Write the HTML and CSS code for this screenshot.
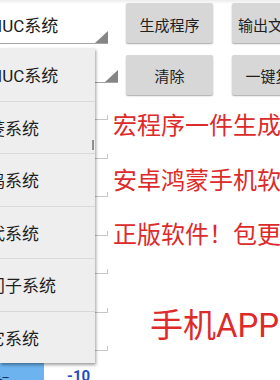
FILE: index.html
```html
<!DOCTYPE html>
<html lang="zh-CN">
<head>
<meta charset="utf-8">
<title>宏程序</title>
<link rel="stylesheet" href="styles.css">
</head>
<body>
<div class="screen">
  <div class="controls">
    <div class="spinner spinner-a">
      <span class="spinner-text">FANUC系统</span>
      <svg class="caret" width="13" height="12" viewBox="0 0 13 12"><polygon points="13,0 13,12 0,12"/></svg>
    </div>
    <button class="btn">生成程序</button>
    <button class="btn btn-right">输出文件名</button>
    <div class="spinner spinner-b">
      <span class="spinner-text">FANUC系统</span>
      <svg class="caret" width="13" height="12" viewBox="0 0 13 12"><polygon points="13,0 13,12 0,12"/></svg>
    </div>
    <button class="btn btn-low">清除</button>
    <button class="btn btn-right btn-low">一键复制</button>
  </div>

  <div class="content">
    <div class="fields">
      <div class="field-row first"><div class="field"></div></div>
      <div class="field-row"><div class="field"></div></div>
      <div class="field-row"><div class="field"></div></div>
      <div class="field-row"><div class="field"></div></div>
      <div class="field-row"><div class="field"></div></div>
      <div class="field-row"><div class="field"></div></div>
      <div class="field-row"><div class="field"></div></div>
    </div>
    <div class="promo">
      <p class="promo-line">宏程序一件生成器</p>
      <p class="promo-line">安卓鸿蒙手机软件</p>
      <p class="promo-line">正版软件！包更新</p>
      <p class="promo-big">手机APP软件</p>
    </div>
  </div>

  <div class="data-row">
    <div class="data-label"><span>坐标</span></div>
    <div class="data-value">-10</div>
  </div>

  <ul class="dropdown">
    <li class="item"><span>FANUC系统</span></li>
    <li class="item"><span>三菱系统</span></li>
    <li class="item"><span>宝鸡系统</span></li>
    <li class="item"><span>新代系统</span></li>
    <li class="item"><span>西门子系统</span></li>
    <li class="item"><span>其它系统</span></li>
    <li class="thumb"></li>
  </ul>
</div>
</body>
</html>
```

FILE: styles.css
```css
* { box-sizing: border-box; }

html, body {
  margin: 0;
  padding: 0;
}

body {
  width: 280px;
  height: 380px;
  overflow: hidden;
  background: linear-gradient(#ececec, #ffffff 4px);
  font-family: Roboto, "Noto Sans CJK SC", sans-serif;
  color: #1c1c1c;
}

.screen {
  position: relative;
  width: 280px;
  height: 380px;
  overflow: hidden;
}

/* top controls */
.controls {
  display: grid;
  grid-template-columns: 118px 87px 98px;
  grid-template-rows: 52px 46px;
  column-gap: 8px;
  width: 330px;
}

.spinner {
  display: flex;
  align-items: center;
  border-bottom: 1px solid #a4a4a4;
  font-size: 17px;
  white-space: nowrap;
}

.spinner-a {
  width: 108px;
  height: 44px;
  padding-top: 5px;
}

.spinner-b {
  width: 118px;
  height: 31px;
}

.spinner-text {
  flex: 1;
  margin-left: -29px;
  color: #1a1a1a;
}

.caret {
  align-self: flex-end;
  flex: none;
  fill: #858585;
  margin-bottom: 0;
}

.btn {
  width: 87px;
  height: 40px;
  margin-top: 3px;
  padding: 2px 0 0;
  border: none;
  border-radius: 2px;
  background: #d7d7d7;
  box-shadow: 0 1px 1.5px rgba(0, 0, 0, 0.35);
  font-family: Roboto, "Noto Sans CJK SC", sans-serif;
  font-size: 15px;
  color: #1e1e1e;
  white-space: nowrap;
}

.btn-right {
  margin-left: 11px;
}

.btn-low {
  padding-top: 1px;
}

/* content area */
.content {
  display: grid;
  grid-template-columns: 108px auto;
  column-gap: 5px;
}

.fields {
  display: flex;
  flex-direction: column;
}

.field-row {
  height: 38.5px;
  display: flex;
  align-items: flex-end;
}

.field-row.first {
  height: 22px;
}

.field {
  width: 100%;
  height: 5px;
  border-bottom: 1px solid #c6c6c6;
  border-right: 1px solid #c6c6c6;
}

.promo {
  padding-top: 1px;
  color: #dd2a2a;
  white-space: nowrap;
}

.promo-line {
  margin: 0;
  font-size: 24px;
  line-height: 54.5px;
}

.promo-big {
  margin: 43px 0 0;
  padding-left: 37px;
  font-size: 33px;
  line-height: 40px;
}

/* bottom data row */
.data-row {
  display: flex;
  margin-top: 11px;
  height: 20px;
}

.data-label {
  width: 44px;
  background: #6cb3f0;
  font-size: 14px;
  line-height: 20px;
  padding-top: 11px;
  color: #1d2f4f;
  white-space: nowrap;
  overflow: hidden;
}

.data-label span {
  display: inline-block;
  margin-left: -18px;
}

.data-value {
  margin-left: 23px;
  padding-top: 4px;
  font-size: 15px;
  font-weight: bold;
  line-height: 20px;
  color: #1f4cc4;
}

/* dropdown overlay */
.dropdown {
  position: absolute;
  top: 48px;
  left: 0;
  width: 95px;
  margin: 0;
  padding: 0;
  list-style: none;
  background: #eeeeee;
  box-shadow: 1px 2px 3px rgba(0, 0, 0, 0.38);
}

.item {
  display: flex;
  align-items: center;
  height: 52.5px;
  font-size: 17px;
  color: #1e1e1e;
  white-space: nowrap;
  overflow: hidden;
}

.item + .item {
  border-top: 1px solid #d8d8d8;
}

.item span {
  margin-left: -29px;
  flex: none;
}

.thumb {
  position: absolute;
  top: 92px;
  right: 1px;
  width: 2px;
  height: 10px;
  background: #8f8f8f;
}
```
